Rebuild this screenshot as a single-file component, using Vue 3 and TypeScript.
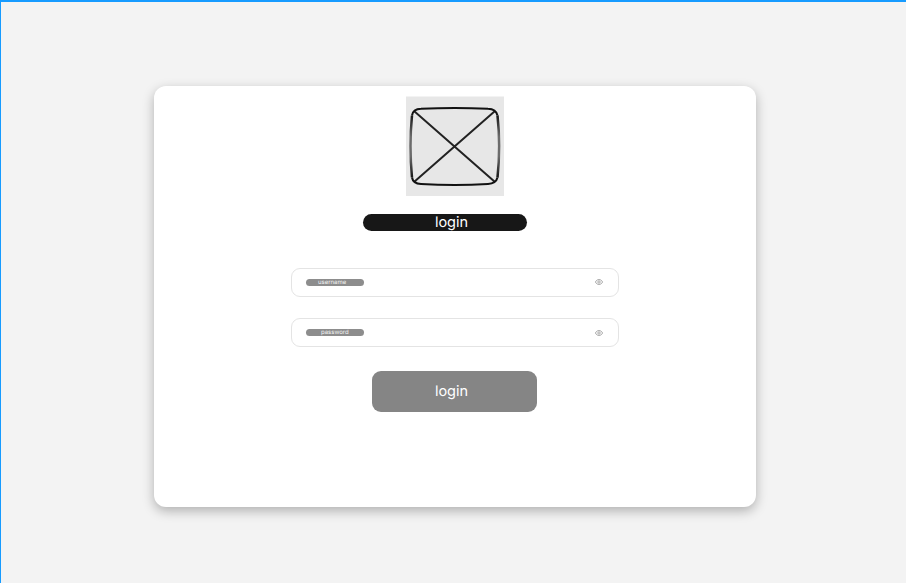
<script setup lang="ts">
import { ref } from 'vue'

interface Field {
  id: string
  label: string
}

const fields = ref<Field[]>([
  { id: 'user', label: 'username' },
  { id: 'pass', label: 'password' },
])
</script>

<template>
  <main class="screen">
    <section class="card">
      <svg class="picture" viewBox="0 0 98 100" fill="none" stroke="#111">
        <defs>
          <linearGradient id="side" gradientUnits="userSpaceOnUse" x1="0" y1="18" x2="0" y2="83">
            <stop offset="0" stop-color="#111" />
            <stop offset=".35" stop-color="#6c6c6c" />
            <stop offset=".65" stop-color="#6c6c6c" />
            <stop offset="1" stop-color="#111" />
          </linearGradient>
        </defs>
        <rect y=".5" width="98" height="99.5" fill="#e7e7e7" stroke="none" />
        <path d="M8 15L89 86M89 15L8 86" stroke="#222" stroke-width="2" />
        <path
          d="M6 19.5Q7 13 15 12.8Q49 11 82 12.8Q90 13 91.5 19.5M91.5 81.5Q90 87.5 82 88Q49 90 15 88Q7 87.5 6 81.5"
          stroke-width="2"
        />
        <path
          d="M91.5 19.5Q94.8 50 91.5 81.5M6 81.5Q3 50 6 19.5"
          stroke="url(#side)"
          stroke-width="2.5"
        />
      </svg>
      <h1 class="title">login</h1>
      <div v-for="field in fields" :key="field.id" class="field">
        <span class="label" :class="field.id">{{ field.label }}</span>
        <svg class="eye" viewBox="0 0 8 6" fill="none" stroke="#888" stroke-width=".7">
          <path d="M.4 3C2-.3 6-.3 7.6 3C6 6.3 2 6.3 .4 3Z" />
          <circle cx="4" cy="3" r="1.2" />
        </svg>
      </div>
      <button class="submit" type="button">login</button>
    </section>
  </main>
</template>

<style>
body {
  margin: 0;
}
</style>

<style scoped>
.screen {
  box-sizing: border-box;
  height: 583px;
  padding: 84px 0 0 3px;
  border-top: 2px solid #169bff;
  border-left: 1px solid #169bff;
  background: #f3f3f3;
  font-family: Inter, "Liberation Sans", sans-serif;
  text-rendering: geometricPrecision;
  overflow: hidden;
}
.card {
  box-sizing: border-box;
  width: 602px;
  height: 421px;
  margin: 0 auto;
  padding-top: 10px;
  border-radius: 12px;
  background: #fff;
  box-shadow: 0 4px 12px rgba(0, 0, 0, .28);
  display: flex;
  flex-direction: column;
  align-items: center;
}
.picture {
  width: 98px;
  height: 100px;
  flex: none;
}
.title {
  width: 164px;
  height: 17px;
  margin: 17.5px 20px 37px 0;
  padding-left: 13px;
  box-sizing: border-box;
  border-radius: 9px;
  background: #171717;
  color: #fff;
  font-size: 14.5px;
  font-weight: 400;
  line-height: 17px;
  text-align: center;
}
.field {
  box-sizing: border-box;
  width: 328px;
  height: 29px;
  margin-bottom: 21.5px;
  padding: 0 15px 0 14px;
  border: 1px solid #e4e4e4;
  border-radius: 9px;
  display: flex;
  align-items: center;
  justify-content: space-between;
}
.label {
  box-sizing: border-box;
  width: 58px;
  height: 7px;
  border-radius: 3.5px;
  background: #8d8d8d;
  color: #f4f4f4;
  font-size: 6px;
  line-height: 8px;
}
.user {
  padding-left: 12px;
}
.pass {
  padding-left: 15px;
}
.eye {
  width: 8px;
  height: 6px;
}
.submit {
  width: 165px;
  height: 41px;
  margin: 2px 1px 0 0;
  padding: 1px 6px 0 0;
  border: 0;
  border-radius: 9px;
  background: #858585;
  color: #fff;
  font: 14.5px/40px Inter, "Liberation Sans", sans-serif;
  text-rendering: geometricPrecision;
}
</style>
